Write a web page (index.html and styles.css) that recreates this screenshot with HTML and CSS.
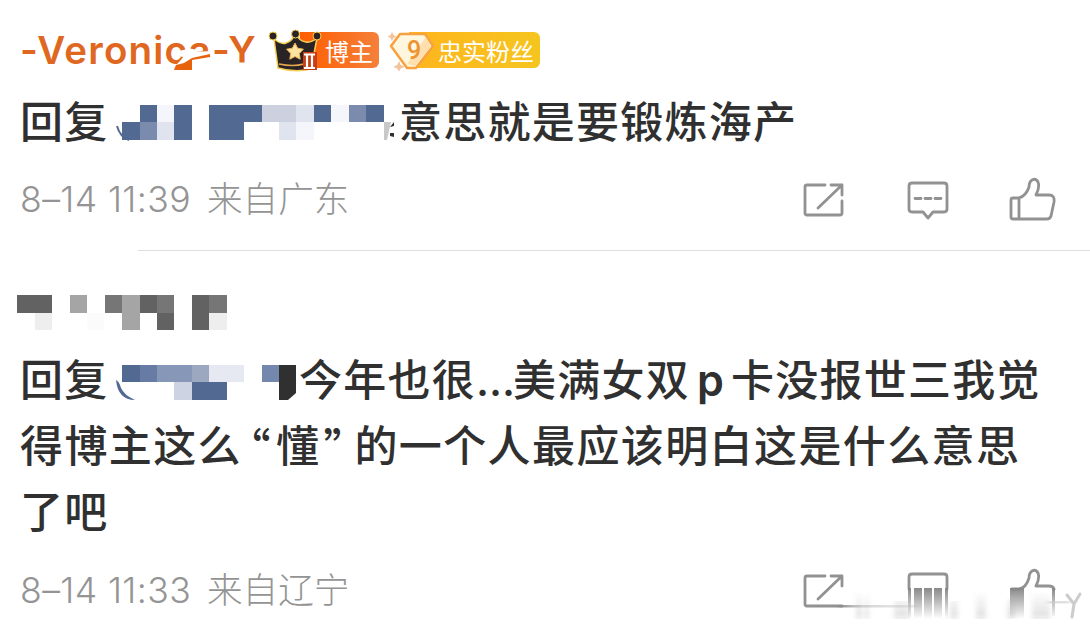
FILE: index.html
```html
<!DOCTYPE html>
<html lang="zh-CN">
<head>
	<title>评论</title>
	<meta charset="utf-8">
	<link rel="stylesheet" href="styles.css">
</head>

<body>
	<svg class="defs" width="0" height="0">
		<defs>
			<linearGradient id="fade" x1="0" y1="0" x2="0" y2="1">
				<stop offset="0" stop-color="#888"/>
				<stop offset="1" stop-color="#888" stop-opacity="0"/>
			</linearGradient>
			<linearGradient id="rise" x1="0" y1="0" x2="0" y2="1">
				<stop offset="0" stop-color="#999" stop-opacity="0"/>
				<stop offset=".8" stop-color="#999" stop-opacity=".25"/>
				<stop offset="1" stop-color="#999" stop-opacity=".15"/>
			</linearGradient>
			<linearGradient id="streak">
				<stop offset="0" stop-color="#888"/>
				<stop offset=".3" stop-color="#aaa" stop-opacity=".5"/>
				<stop offset="1" stop-color="#bbb" stop-opacity=".3"/>
			</linearGradient>
			<filter id="soft" x="-20%" y="-20%" width="140%" height="140%">
				<feGaussianBlur stdDeviation="2 .5"/>
			</filter>
		</defs>
	</svg>

	<article class="comment first">
		<header>
			<div class="name">-Veronica-Y
				<svg class="smudge" width="240" height="50" viewBox="20 25 240 50">
					<path fill="#fff" d="M180 61l4-5 8-4 20-1v18h-36v-4zM236 62.500h16v8h-16z"/>
					<path fill="#e8620c" d="M174 70l2-5 8-2 8-5 18-4v3l-18 3v10z"/>
				</svg>
			</div>
			<div class="badge owner">
				<svg width="54" height="44" viewBox="268 28 54 44">
					<path d="M274 39q8 6 12 4 7-2 9-10 4 8 11 9 5 1 11-4l-6 31q-16 4-33-1z" fill="#292325" stroke="#f5cf55" stroke-width="1.500" stroke-linejoin="round"/>
					<g fill="#292325" stroke="#f5cf55"><circle cx="273" cy="36" r="4"/><circle cx="295.500" cy="34" r="4"/><circle cx="317" cy="36" r="4"/></g>
					<path d="M279 64q14 3 25 0" fill="none" stroke="#e7a84a" stroke-width="1.500"/>
					<path d="M295 43l2.600 5.200 5.800 1-4.100 4.200.9 5.800-5.200-2.700-5.200 2.700.9-5.800-4.100-4.200 5.800-1z" fill="#ffe3a0" stroke="#efb555"/>
					<path d="M303 52h14v18h-14z" fill="#c63d16"/>
					<path d="M304 54.500h11M304 68h11M307 55v13M312 55v13" stroke="#fff" stroke-width="2.200"/>
				</svg>
				<span>博主</span>
			</div>
			<div class="badge fan">
				<svg width="50" height="44" viewBox="387 27 50 44">
					<path d="M400 33h25l8 12-17 22h-9l-16-22z" fill="#fff6df" stroke="#f7a23e" stroke-width="2.500" stroke-linejoin="round"/>
					<path d="M426 36l5 10-16 19-8-2z" fill="#ffdfae"/>
					<path d="M392 31l1.500 3 3 1.500-3 1.500-1.500 3-1.500-3-3-1.500 3-1.500zM399 60l1.800 4 4 1.800-4 1.800-1.800 3-1.800-3-4-1.800 4-1.800z" fill="#f3c49c"/>
					<text x="407" y="58" class="level">9</text>
				</svg>
				<span>忠实粉丝</span>
			</div>
		</header>

		<p class="line"><span>回复</span><svg class="mosaic" width="294" height="44" viewBox="105 100 294 44" shape-rendering="crispEdges">
			<path fill="#526991" d="M140 105h17v17h-17zM122 122h18v18h-18zM174 105h18v35h-18zM209 105h53v17h-18v18h-35zM314 105h17v17h-17zM366 105h18v17h-18z"/>
			<path fill="#7a8bae" d="M140 122h17v18h-17zM349 105h17v17h-17z"/>
			<path fill="#cdd1df" d="M262 105h34v17h-34z"/>
			<path fill="#e0e4ee" d="M157 122h17v18h-17zM296 105h18v17h-18zM279 122h17v18h-17z"/>
			<path fill="#f4f6fb" d="M157 105h17v17h-17zM331 105h18v17h-18zM296 122h18v18h-18z"/>
			<path fill="none" stroke="#526991" stroke-width="2" shape-rendering="auto" d="M117 126q3 11 12 14"/>
			<path fill="#c8c8c8" shape-rendering="auto" d="M384 122h7l-2 9-2 9h-3z"/>
			<path fill="#303030" shape-rendering="auto" d="M390 127l4-5v4zM390 133h4v4l-4-1z"/>
		</svg><span>意思就是要锻炼海产</span></p>

		<footer>
			<time>8–14 11:39</time>
			<span>来自广东</span>
			<svg class="icons" width="260" height="60" viewBox="800 170 260 60">
				<path d="M825 185h-18q-2 0-2 2v26q0 2 2 2h33q2 0 2-2v-12M831 185h11v10M842 185l-24 23"/>
				<path d="M912 183h32q3 0 3 3v23q0 3-3 3h-11l-5 6-5-6h-11q-3 0-3-3v-23q0-3 3-3zM915 198.500h6M925 198.500h6M935 198.500h6"/>
				<path d="M1019 198h-6q-2 0-2 2v17q0 2 2 2h34q3 0 4-3l3-14q1-7-5-7h-13q4-8 2-13-2-4-6-2-3 2-3 7-3 9-10 11zv21"/>
			</svg>
		</footer>
	</article>

	<article class="comment second">
		<svg class="hidden-name" width="214" height="36" viewBox="17 295 214 36" shape-rendering="crispEdges">
			<path fill="#626262" d="M17 295h35v18H17zM140 295h17v18h-17zM157 313h17v17h-17zM192 295h17v35h-17z"/>
			<path fill="#767676" d="M105 295h17v18h-17zM157 295h17v18h-17zM209 295h18v18h-18z"/>
			<path fill="#a5a5a5" d="M70 295h17v18H70zM122 295h18v35h-18z"/>
			<path fill="#eee" d="M35 313h17v17H35zM209 313h18v17h-18z"/>
			<path fill="#fbfbfb" d="M87 313h17v17H87z"/>
		</svg>

		<p class="line"><span>回复</span><svg class="mosaic" width="194" height="44" viewBox="105 358 194 44" shape-rendering="crispEdges">
			<path fill="#526991" d="M122 365h18v17h-18zM192 382h35v18h-35z"/>
			<path fill="#677ba4" d="M140 365h17v17h-17z"/>
			<path fill="#8797b8" d="M157 365h35v17h-35z"/>
			<path fill="#7487ad" d="M262 365h17v17h-17z"/>
			<path fill="#9ba8c0" d="M192 365h17v17h-17z"/>
			<path fill="#cdd3e3" d="M174 382h18v18h-18z"/>
			<path fill="#e6e9f1" d="M209 365h35v17h-35z"/>
			<path fill="#526991" shape-rendering="auto" d="M116 380q3 1 5 8 3 7 14 12-17 0-19-20z"/>
			<path fill="#303030" shape-rendering="auto" d="M279 365h17v28l-8 7h-9z"/>
		</svg><span>今年也很</span><span class="dots">...</span><span>美满女双</span><span class="latin">p</span><span>卡没报世三我觉</span></p>
		<p class="line wide"><span>得博主这么</span><span class="open">“</span><span>懂</span><span class="close">”</span><span>的一个人最应该明白这是什么意思</span></p>
		<p class="line"><span>了吧</span></p>

		<footer>
			<time>8–14 11:33</time>
			<span>来自辽宁</span>
			<svg class="icons" width="290" height="60" viewBox="800 560 290 60">
				<path d="M825 575h-18q-2 0-2 2v26q0 2 2 2h35M831 575h11v10M842 575l-24 23"/>
				<path d="M909 588v-12q0-3 3-3h32q3 0 3 3v12"/>
				<path d="M1012 588h7q7-1 10-11 0-5 3-7 4-2 6 2 2 5-2 13h13q4 0 5 3"/>
				<g class="smear">
					<path fill="url(#fade)" d="M908 587h3v31h-3zM914 587h8v30h-8zM924 587h8v30h-8zM934 587h8v30h-8zM945 587h3v31h-3zM1010 587h14v30h-14zM1052 587h3v28h-3z"/>
					<g filter="url(#soft)">
						<path fill="url(#rise)" d="M856 590h6v28h-6zM865 590h4v28h-4zM894 600h15v18h-15zM950 600h8v18h-8zM976 590h10v28h-10zM1007 598h8v20h-8zM1032 590h18v28h-18z"/>
						<path fill="url(#streak)" d="M839 604h78v2.500h-78z"/>
						<path fill="#ccc" opacity=".6" d="M1048 600h22v2.500h-22z"/>
					</g>
					<path class="mark" d="M1067 594l7 9 6-10M1074 603l-2 13"/>
				</g>
			</svg>
		</footer>
	</article>
</body>
</html>
```
FILE: styles.css
```css
* {
	box-sizing: border-box;
	margin: 0;
}

body {
	height: 629px;
	overflow: hidden;
	background: #fff;
	color: #303030;
	font-family: Inter, "Noto Sans CJK SC", sans-serif;
}

.defs {
	display: block;
}

.comment {
	padding-left: 20px;
}

.first {
	height: 251px;
	padding-top: 25px;
	background: linear-gradient(#dedede, #dedede) 138px 250px / 952px 1px no-repeat;
}

.second {
	padding-top: 44px;
}

header {
	display: flex;
	height: 50px;
	align-items: center;
}

.name {
	position: relative;
	width: 248px;
	color: #e0671f;
	font-size: 38.5px;
	font-weight: 600;
	letter-spacing: 1.2px;
	line-height: 54px;
	white-space: nowrap;
}

.smudge {
	position: absolute;
	left: 0;
	top: 2px;
}

.badge {
	display: flex;
	align-items: center;
	height: 36px;
	color: #fff;
	font-size: 24px;
	white-space: nowrap;
}

.badge svg {
	flex: none;
}

.owner {
	width: 111px;
	background: linear-gradient(90deg, #ff5d00, #f5803a) 32px 0 / 79px 36px no-repeat;
	border-radius: 6px;
}

.owner span {
	margin-left: 3px;
}

.fan {
	width: 153px;
	margin-left: 8px;
	background: linear-gradient(90deg, #ffb51c, #f5c51f) 22px 0 / 131px 36px no-repeat;
	border-radius: 6px;
}

.fan span {
	margin-left: 1px;
}

.level {
	fill: #ed9332;
	font-family: Roboto, sans-serif;
	font-size: 25px;
	font-weight: 500;
}

.line {
	display: flex;
	align-items: center;
	height: 66px;
	font-size: 43px;
	font-weight: 500;
	letter-spacing: 1.25px;
	line-height: 66px;
	white-space: nowrap;
}

.wide {
	letter-spacing: 1.4px;
}

.first .line {
	height: 94px;
	line-height: 94px;
}

.line span {
	flex: none;
}

.mosaic {
	flex: none;
	margin-left: -3.5px;
}

.dots {
	width: 37px;
	letter-spacing: 0;
}

.latin {
	width: 41px;
	padding-left: 7px;
	font-weight: 600;
}

.open,
.close {
	width: 34px;
	font-family: "Noto Sans CJK SC", sans-serif;
	font-feature-settings: "halt";
}

.open {
	padding-right: 4px;
	text-align: right;
}

.close {
	padding-left: 3px;
}

.hidden-name {
	display: block;
	margin: 0 0 16px -3px;
}

footer {
	display: flex;
	height: 60px;
	align-items: center;
	color: #949494;
	font-size: 35.6px;
	font-weight: 300;
	line-height: 60px;
	white-space: nowrap;
}

.first footer {
	position: relative;
	top: 1px;
}

footer time {
	width: 187px;
	letter-spacing: .4px;
}

.second footer {
	margin-top: 16px;
}

.icons {
	margin-left: auto;
	margin-right: 30px;
	fill: none;
	stroke: #929292;
	stroke-width: 2.8;
	stroke-linecap: round;
	stroke-linejoin: round;
}

.second .icons {
	margin-right: 0;
}

.smear {
	stroke: none;
}

.mark {
	stroke: #ccc;
	stroke-width: 3;
}
```
